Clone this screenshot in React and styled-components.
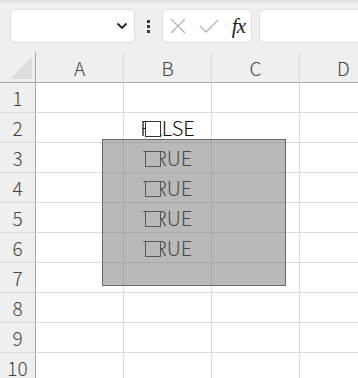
import React from "react";
import styled, { createGlobalStyle } from "styled-components";

const GlobalStyle = createGlobalStyle`
  html, body { margin:0; padding:0; background:#ffffff; }
  body { width:358px; height:378px; overflow:hidden; font-family:"Noto Sans CJK JP","Noto Sans",sans-serif; }
`;

const Toolbar = styled.div`
  display:flex;
  align-items:center;
  height:52px;
  padding-left:10px;
  box-sizing:border-box;
  background:#efefef;
  border-top:3px solid #e4e4e4;
  overflow:hidden;
`;

const Box = styled.div`
  flex:none;
  display:flex;
  align-items:center;
  box-sizing:border-box;
  width:${(p) => p.width}px;
  height:34px;
  margin-top:-3px;
  background:#ffffff;
  border:1px solid #dedede;
  border-radius:5px;
`;

const NameBox = styled(Box)`
  justify-content:flex-end;
  padding-right:6px;
`;

const FormulaButtons = styled(Box)`
  justify-content:space-between;
  padding:0 6px 0 7px;
`;

const Dots = styled.div`
  flex:none;
  width:27px;
  display:flex;
  flex-direction:column;
  align-items:center;
  gap:2px;
  margin-top:-3px;
  span { width:3px; height:3px; background:#3a3a3a; }
`;

const Fx = styled.span`
  font-family:"Liberation Serif",serif;
  font-style:italic;
  font-size:21px;
  color:#222;
  letter-spacing:-1px;
`;

const Sheet = styled.div`
  position:relative;
  display:grid;
  grid-template-columns:36px repeat(4, 88px);
  grid-auto-rows:30px;
  grid-template-rows:31px;
  overflow:hidden;
  font-weight:300;
`;

const Corner = styled.div`
  position:relative;
  background:#efefef;
  border-right:1px solid #a8a8a8;
  border-bottom:1px solid #a8a8a8;
  svg { position:absolute; left:10px; top:5px; }
`;

const ColHead = styled.div`
  display:flex;
  align-items:center;
  justify-content:center;
  background:#efefef;
  border-right:1px solid #dcdcdc;
  border-bottom:1px solid #a8a8a8;
  font-size:19px;
  color:#444;
  padding-top:1px;
`;

const RowHead = styled.div`
  display:flex;
  align-items:center;
  justify-content:center;
  background:#efefef;
  border-right:1px solid #a8a8a8;
  border-bottom:1px solid #dcdcdc;
  font-size:19px;
  color:#444;
`;

const Cell = styled.div`
  position:relative;
  display:flex;
  align-items:center;
  justify-content:center;
  border-right:1px solid #dcdcdc;
  border-bottom:1px solid #dcdcdc;
  font-size:20px;
  color:#111;
`;

const CheckMark = styled.span`
  position:absolute;
  left:21px;
  top:8px;
  width:16px;
  height:16px;
  box-sizing:border-box;
  background:#ffffff;
  border:1px solid #333;
`;

const Overlay = styled.div`
  position:absolute;
  left:102px;
  top:87px;
  width:184px;
  height:147px;
  box-sizing:border-box;
  background:rgba(120,120,120,0.52);
  border:1px solid #6a6a6a;
`;

const columns = ["A", "B", "C", "D"];
const values = { 2: "FALSE", 3: "TRUE", 4: "TRUE", 5: "TRUE", 6: "TRUE" };

const App = () => {
  const rows = [1, 2, 3, 4, 5, 6, 7, 8, 9, 10];
  return (
    <>
      <GlobalStyle />
      <Toolbar>
        <NameBox width={125}>
          <svg width="12" height="8" viewBox="0 0 12 8">
            <path d="M1.5 1.5 L6 6 L10.5 1.5" fill="none" stroke="#222" strokeWidth="1.8" />
          </svg>
        </NameBox>
        <Dots><span /><span /><span /></Dots>
        <FormulaButtons width={90}>
          <svg width="16" height="16" viewBox="0 0 16 16">
            <path d="M1 1 L15 15 M15 1 L1 15" stroke="#b4b4b4" strokeWidth="1.3" />
          </svg>
          <svg width="20" height="16" viewBox="0 0 20 16">
            <path d="M1 8 L7 14 L19 2" fill="none" stroke="#b4b4b4" strokeWidth="1.3" />
          </svg>
          <Fx>fx</Fx>
        </FormulaButtons>
        <Box width={130} style={{ marginLeft: 7 }} />
      </Toolbar>
      <Sheet>
        <Corner>
          <svg width="22" height="22" viewBox="0 0 22 22">
            <path d="M22 0 L22 22 L0 22 Z" fill="#dcdcdc" />
          </svg>
        </Corner>
        {columns.map((c) => (
          <ColHead key={c}>{c}</ColHead>
        ))}
        {rows.map((r) => (
          <React.Fragment key={r}>
            <RowHead>{r}</RowHead>
            {columns.map((c) => (
              <Cell key={c}>
                {c === "B" && values[r] && (
                  <>
                    {values[r]}
                    <CheckMark />
                  </>
                )}
              </Cell>
            ))}
          </React.Fragment>
        ))}
        <Overlay />
      </Sheet>
    </>
  );
};

export default App;
